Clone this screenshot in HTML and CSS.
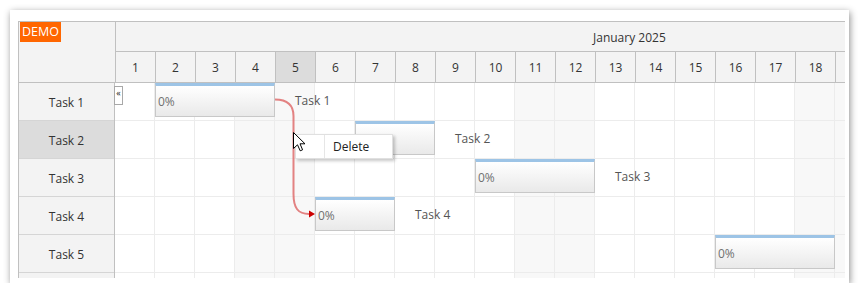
FILE: index.html
```html
<!DOCTYPE html>
<html>
<head>
<meta charset="utf-8">
<link rel="stylesheet" href="styles.css">
</head>
<body>
<div class="card">
  <div class="gantt">
    <div class="header">
      <div class="corner"><span class="demo">DEMO</span></div>
      <div class="timeline">
        <div class="month"><span>January 2025</span></div>
        <div class="days">
          <div class="day">1</div><div class="day">2</div><div class="day">3</div><div class="day">4</div>
          <div class="day hover">5</div><div class="day">6</div><div class="day">7</div><div class="day">8</div>
          <div class="day">9</div><div class="day">10</div><div class="day">11</div><div class="day">12</div>
          <div class="day">13</div><div class="day">14</div><div class="day">15</div><div class="day">16</div>
          <div class="day">17</div><div class="day">18</div><div class="day"></div>
        </div>
      </div>
    </div>
    <div class="main">
      <div class="rowheaders">
        <div class="rh">Task 1</div>
        <div class="rh hover">Task 2</div>
        <div class="rh">Task 3</div>
        <div class="rh">Task 4</div>
        <div class="rh">Task 5</div>
        <div class="rh"></div>
      </div>
      <div class="grid">
        <div class="row">
          <div class="bar c2 s3">0%</div>
          <div class="label c5">Task 1</div>
        </div>
        <div class="row">
          <div class="bar c7 s2"></div>
          <div class="label c9">Task 2</div>
        </div>
        <div class="row">
          <div class="bar c10 s3">0%</div>
          <div class="label c13">Task 3</div>
        </div>
        <div class="row">
          <div class="bar c6 s2">0%</div>
          <div class="label c8">Task 4</div>
        </div>
        <div class="row">
          <div class="bar c16 s3">0%</div>
        </div>
        <div class="row"></div>

        <div class="collapse">«</div>

        <svg class="links" width="400" height="200" viewBox="0 0 400 200">
          <path d="M160,16.5 C171,16.5 178.5,21 178.5,33 L178.5,111 C178.5,125 183,131 194,131" fill="none" stroke="#e07474" stroke-opacity="0.9" stroke-width="2"/>
          <polygon points="194,127.5 194,134.5 200,131" fill="#cc0000"/>
        </svg>

        <div class="menu">
          <div class="item"><span class="gutter"></span><span class="text">Delete</span></div>
        </div>

        <svg class="cursor" width="13" height="20" viewBox="0 0 13 20">
          <path d="M0.5,0.5 L0.5,16.5 L4.5,12.8 L7.2,18.8 L9.6,17.8 L7,11.8 L12,11.8 Z" fill="#fff" stroke="#000" stroke-width="1" stroke-linejoin="miter"/>
        </svg>
      </div>
    </div>
  </div>
</div>
</body>
</html>
```

FILE: styles.css
```css
html, body {
  margin: 0;
  padding: 0;
  background: #fff;
}

body {
  font-family: "Open Sans", "Noto Sans", sans-serif;
  font-size: 12px;
  color: #333;
}

.card {
  margin: 10px 0 0 10px;
  width: 839px;
  height: 273px;
  box-sizing: border-box;
  padding: 11px 4px 5px 8px;
  background: #fff;
  box-shadow: 1px 2px 7px rgba(0, 0, 0, 0.45);
}

.gantt {
  width: 827px;
  height: 257px;
  box-sizing: border-box;
  border-left: 1px solid #c0c0c0;
  border-top: 1px solid #c0c0c0;
  overflow: hidden;
  display: flex;
  flex-direction: column;
}

.header {
  display: flex;
  flex-shrink: 0;
}

.corner {
  width: 95px;
  height: 60px;
  flex-shrink: 0;
  background: #f3f3f3;
  border-right: 1px solid #c0c0c0;
  border-bottom: 1px solid #c0c0c0;
  padding: 0 0 0 1px;
}

.demo {
  display: inline-block;
  background: #ff6600;
  color: #fff;
  font-size: 12.5px;
  line-height: 20px;
  padding: 0 2px;
  height: 20px;
}

.timeline {
  display: flex;
  flex-direction: column;
  flex-shrink: 0;
  width: 760px;
}

.month {
  height: 27px;
  padding-top: 2px;
  background: #f3f3f3;
  border-bottom: 1px solid #c0c0c0;
  padding-left: 477px;
  line-height: 27px;
  color: #333;
  font-size: 12px;
}

.days {
  display: flex;
}

.day {
  width: 39px;
  height: 28px;
  padding-top: 2px;
  flex-shrink: 0;
  background: #f3f3f3;
  border-right: 1px solid #c0c0c0;
  border-bottom: 1px solid #c0c0c0;
  text-align: center;
  line-height: 28px;
}

.day.hover {
  background: #dcdcdc;
}

.main {
  display: flex;
  flex: 1;
  min-height: 0;
}

.rowheaders {
  width: 95px;
  flex-shrink: 0;
  border-right: 1px solid #c0c0c0;
  background: #f3f3f3;
}

.rh {
  height: 35px;
  padding-top: 2px;
  border-bottom: 1px solid #d5d5d5;
  text-align: center;
  line-height: 35px;
  color: #333;
}

.rh.hover {
  background: #dcdcdc;
}

.grid {
  position: relative;
  width: 760px;
  flex-shrink: 0;
  background-color: #fff;
  background-image:
    linear-gradient(to right, transparent 39px, #ececec 39px),
    linear-gradient(to bottom, transparent 37px, #ececec 37px),
    linear-gradient(to right,
      transparent 120px, #f8f8f8 120px, #f8f8f8 200px,
      transparent 200px, transparent 400px, #f8f8f8 400px, #f8f8f8 480px,
      transparent 480px, transparent 680px, #f8f8f8 680px);
  background-size: 40px 100%, 100% 38px, 100% 100%;
}

.row {
  height: 38px;
  display: grid;
  grid-template-columns: repeat(19, 40px);
  grid-template-rows: 34px;
  align-items: start;
}

.bar {
  grid-row: 1;
  box-sizing: border-box;
  height: 34px;
  background: linear-gradient(to bottom, #ffffff, #e9e9e9);
  border: 1px solid #c8c8c8;
  border-top: 3px solid #9dc4e6;
  padding: 2px 0 0 2px;
  line-height: 28px;
  color: #707070;
  white-space: nowrap;
  overflow: hidden;
}

.label {
  grid-row: 1;
  padding: 2px 0 0 20px;
  line-height: 32px;
  white-space: nowrap;
  color: #555;
}

.c2 { grid-column-start: 2; }
.c5 { grid-column-start: 5; }
.c6 { grid-column-start: 6; }
.c7 { grid-column-start: 7; }
.c8 { grid-column-start: 8; }
.c9 { grid-column-start: 9; }
.c10 { grid-column-start: 10; }
.c13 { grid-column-start: 13; }
.c16 { grid-column-start: 16; }
.s2 { grid-column-end: span 2; }
.s3 { grid-column-end: span 3; }

.collapse {
  position: absolute;
  left: -1px;
  top: 3px;
  width: 7px;
  height: 17px;
  background: #fff;
  border: 1px solid #a8a8a8;
  font-size: 9px;
  line-height: 12px;
  text-align: center;
  color: #222;
}

.links {
  position: absolute;
  left: 0;
  top: 0;
  pointer-events: none;
}

.menu {
  position: absolute;
  left: 180px;
  top: 51px;
  width: 98px;
  height: 25px;
  box-sizing: border-box;
  background: #fff;
  border: 1px solid #e0e0e0;
  box-shadow: 2px 2px 3px rgba(0, 0, 0, 0.22);
}

.item {
  display: flex;
  height: 23px;
}

.gutter {
  width: 28px;
  border-right: 1px solid #e6e6e6;
}

.text {
  padding: 1px 0 0 8px;
  line-height: 22px;
  color: #222;
}

.cursor {
  position: absolute;
  left: 178px;
  top: 49px;
}
```
